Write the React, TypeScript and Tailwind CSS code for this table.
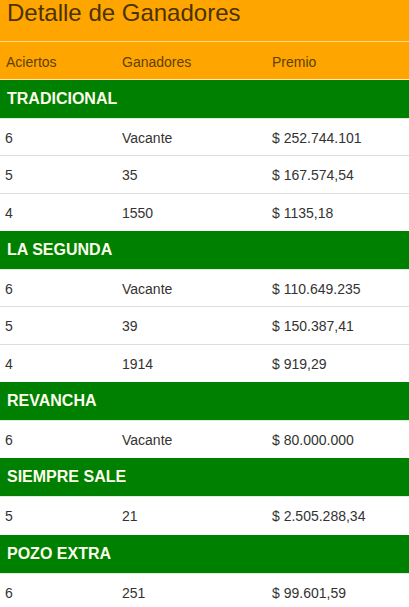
import React from "react";

type Row = [string, string, string];
const sections: { name: string; rows: Row[] }[] = [
  { name: "TRADICIONAL", rows: [["6", "Vacante", "$ 252.744.101"], ["5", "35", "$ 167.574,54"], ["4", "1550", "$ 1135,18"]] },
  { name: "LA SEGUNDA", rows: [["6", "Vacante", "$ 110.649.235"], ["5", "39", "$ 150.387,41"], ["4", "1914", "$ 919,29"]] },
  { name: "REVANCHA", rows: [["6", "Vacante", "$ 80.000.000"]] },
  { name: "SIEMPRE SALE", rows: [["5", "21", "$ 2.505.288,34"]] },
  { name: "POZO EXTRA", rows: [["6", "251", "$ 99.601,59"]] },
];

export default function App() {
  return (
    <div className="w-[409px] h-[607px] overflow-hidden bg-white" style={{ fontFamily: '"Liberation Sans", Arial, sans-serif' }}>
      <div className="bg-[#ffa500]">
        <div className="h-[42px] border-b border-[#ffd98a] pl-[7px] flex items-start">
          <h1 className="text-[24px] leading-[25px] text-[#4a3300]">Detalle de Ganadores</h1>
        </div>
        <div className="h-[38px] border-b border-[#ffe3a8] flex items-center pt-[3px] text-[14px] text-[#5e4000]">
          <div className="w-[117px] pl-[6px]">Aciertos</div>
          <div className="w-[150px] pl-[5px]">Ganadores</div>
          <div className="flex-1 pl-[5px]">Premio</div>
        </div>
      </div>
      {sections.map((s) => (
        <div key={s.name}>
          <div className="h-[39px] bg-[#008000] border-b border-[#d8f0d8] flex items-center pl-[7px] text-[16px] font-bold text-[#fdfdec]">
            {s.name}
          </div>
          {s.rows.map((r, i) => (
            <div key={i} className="h-[37.33px] border-b border-[#dddddd] last:border-b-0 flex items-center pt-[2px] text-[14px] text-[#333333]">
              <div className="w-[117px] pl-[5px]">{r[0]}</div>
              <div className="w-[150px] pl-[5px]">{r[1]}</div>
              <div className="flex-1 pl-[5px]">{r[2]}</div>
            </div>
          ))}
        </div>
      ))}
    </div>
  );
}
